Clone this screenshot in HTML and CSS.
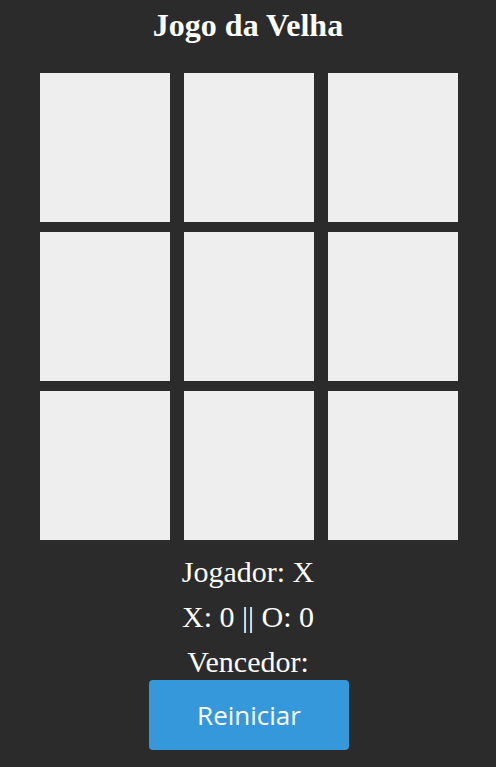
FILE: index.html
```html
<!DOCTYPE html>
<html>
<head>
<meta charset="utf-8">
<link rel="stylesheet" href="styles.css">
</head>
<body>
<div class="app">
  <h1 class="title">Jogo da Velha</h1>
  <div class="board">
    <div class="cell"></div><div class="cell"></div><div class="cell"></div>
    <div class="cell"></div><div class="cell"></div><div class="cell"></div>
    <div class="cell"></div><div class="cell"></div><div class="cell"></div>
  </div>
  <div class="info first">Jogador: X</div>
  <div class="info">X: 0 || O: 0</div>
  <div class="info">Vencedor: </div>
  <button class="reset">Reiniciar</button>
</div>
</body>
</html>
```
FILE: styles.css
```css
html, body {
  margin: 0;
  padding: 0;
  background: #2b2b2b;
}
.app {
  display: flex;
  flex-direction: column;
  align-items: center;
  font-family: "Liberation Serif", serif;
  color: #fff;
}
.title {
  margin: 7px 0 0;
  font-size: 32px;
  font-weight: bold;
  line-height: 36px;
  height: 66px;
}
.board {
  display: grid;
  grid-template-columns: repeat(3, 130px);
  grid-auto-rows: 149px;
  gap: 10px 14px;
  margin-left: 2px;
}
.cell {
  background: #eeeeee;
}
.info {
  font-size: 30px;
  line-height: 45px;
}
.info.first {
  margin-top: 9px;
}
.reset {
  margin-top: -4px;
  margin-left: 2px;
  width: 200px;
  height: 70px;
  border: none;
  border-radius: 4px;
  background: #3498db;
  color: #fff;
  font-family: "Open Sans", sans-serif;
  font-size: 26px;
}
```
